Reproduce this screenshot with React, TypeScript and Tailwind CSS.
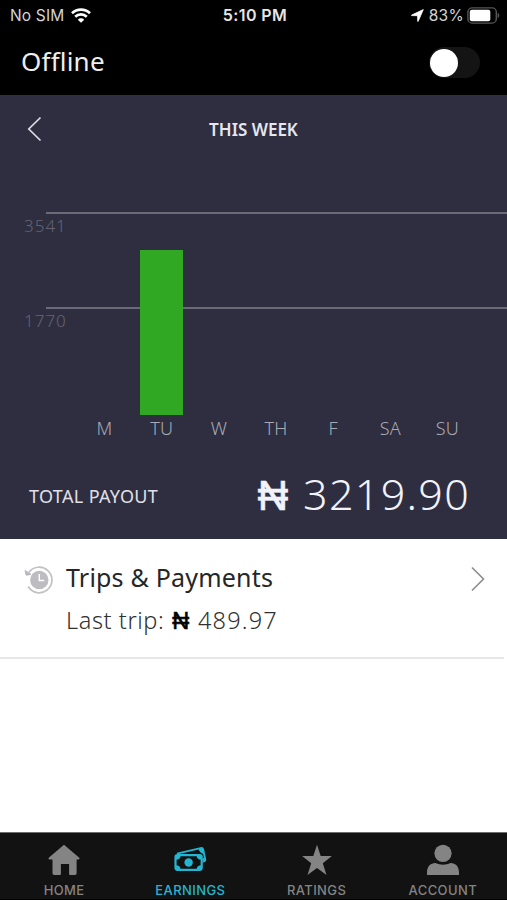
import React from "react";

const DAYS = [
  { label: "M", height: 0 },
  { label: "TU", height: 165 },
  { label: "W", height: 0 },
  { label: "TH", height: 0 },
  { label: "F", height: 0 },
  { label: "SA", height: 0 },
  { label: "SU", height: 0 },
];

const StatusBar: React.FC = () => (
  <div className="grid h-[30px] grid-cols-3 items-center pl-[10px] pr-[7px] font-['Inter',sans-serif] text-[15.5px] leading-none text-[#d4d4d4]">
    <div className="flex items-center gap-[7px]">
      <span className="pt-px whitespace-nowrap tracking-[0.15px]">No SIM</span>
      <svg width="20" height="15" viewBox="0 0 20 15" fill="none" stroke="#fff" strokeWidth="2.7">
        <path d="M1 5.2a13 13 0 0 1 18 0" />
        <path d="M4.2 8.7a8.5 8.5 0 0 1 11.6 0" />
        <path d="M10 14.8 6.8 11.8a4.3 4.3 0 0 1 6.4 0Z" fill="#fff" stroke="none" />
      </svg>
    </div>
    <div className="text-center text-[16px] font-semibold tracking-[0.4px] whitespace-nowrap text-[#e6e6e6]">5:10 PM</div>
    <div className="flex items-center justify-end">
      <svg width="13" height="13" viewBox="0 0 13 13" fill="#fff" stroke="#fff" strokeWidth=".8" strokeLinejoin="round" className="mr-[5px]">
        <path d="M12.3.6.6 6.1c-.3.2-.2.5.1.5l5.9.1.1 5.5c0 .4.3.4.5.1Z" />
      </svg>
      <span className="mr-[3px] pt-px tracking-[0.3px]">83%</span>
      <svg width="33" height="17" viewBox="0 0 33 17">
        <rect x=".9" y=".9" width="28.4" height="15.2" rx="4.2" fill="none" stroke="#555" strokeWidth="1.4" />
        <rect x="2.8" y="2.8" width="20.5" height="11.4" rx="2" fill="#fff" />
        <path d="M30.6 5.8c2.2.9 2.2 4.5 0 5.4Z" fill="#555" />
      </svg>
    </div>
  </div>
);

const OnlineToggle: React.FC = () => (
  <div className="flex h-[65px] items-center justify-between pl-[21px] pr-[27px]">
    <span className="-mt-[4px] text-[26px] leading-none tracking-[0.2px] text-[#eee]">Offline</span>
    <div className="flex h-[31px] w-[51px] items-center rounded-full bg-[#141414] pl-[1px]">
      <div className="size-[28px] rounded-full bg-white" />
    </div>
  </div>
);

const WeekChart: React.FC = () => (
  <div className="grid h-[245px]">
    <div className="col-start-1 row-start-1 pt-px">
      {[3541, 1770].map((value) => (
        <div key={value} className="h-[94.5px]">
          <div className="ml-[46px] h-[2px] bg-[#696978]" />
          <div className="pt-[2px] pl-[24px] text-[17px] leading-[19px] font-[350] tracking-[1px] text-[#636371]">{value}</div>
        </div>
      ))}
    </div>
    <div className="z-10 col-start-1 row-start-1 ml-[76px] grid w-[400px] grid-cols-7">
      {DAYS.map((day) => (
        <div key={day.label} className="flex flex-col items-center justify-end">
          <div className="w-[43px] bg-[#31a824]" style={{ height: day.height }} />
          <div className="h-[41px] pt-[2px] text-[18px] leading-[22px] font-[350] tracking-[0.2px] text-[#aaaab5]">{day.label}</div>
        </div>
      ))}
    </div>
  </div>
);

const EarningsPanel: React.FC = () => (
  <section className="flex h-[444px] flex-col bg-[#2e2e40]">
    <header className="grid h-[68px] grid-cols-[1fr_auto_1fr] items-center px-[27px]">
      <svg width="16" height="26" viewBox="0 0 16 26" fill="none" stroke="#dcdce4" strokeWidth="1.7">
        <path d="M13.5 1.5 1.8 13l11.7 11.5" />
      </svg>
      <h1 className="pt-px text-[17px] font-semibold text-[#e6e6ee]">THIS WEEK</h1>
    </header>
    <div className="pt-[48px]">
      <WeekChart />
    </div>
    <div className="flex h-[82px] items-center justify-between pl-[29px] pr-[37px]">
      <span className="-mt-[2px] text-[18px] tracking-[0.35px] text-[#e0e0e8]">TOTAL PAYOUT</span>
      <div className="-mt-[6px] flex items-baseline gap-[15px] text-[#f2f2fa]">
        <span className="font-['Liberation_Sans',sans-serif] text-[42px] leading-none [-webkit-text-stroke:0.7px_currentColor]">₦</span>
        <span className="text-[43px] leading-none font-light tracking-[1.3px]">3219.90</span>
      </div>
    </div>
  </section>
);

const TripsRow: React.FC = () => (
  <div className="mr-[3px] flex h-[120px] items-start border-b-[2px] border-[#e6e6e6] pt-[21px] pl-[24px]">
    <svg width="30" height="30" viewBox="0 0 30 30" className="mt-[5px] mr-[12px]" fill="none">
      <path d="M4.600 7.800A12.800 12.800 0 1 1 4.200 21.500" stroke="#c2c2c6" strokeWidth="1.7" />
      <path d="m1 5.400 1.200 4.800 4.800-.8Z" fill="#b8b8bd" stroke="#b8b8bd" strokeWidth="1" strokeLinejoin="round" />
      <circle cx="15.300" cy="14.900" r="9.200" fill="#bcbcc1" />
      <path d="M15.300 9v6.600h4.800" stroke="#fff" strokeWidth="1.500" />
    </svg>
    <div className="flex-1">
      <div className="text-[25px] leading-[34px] tracking-[0.2px] text-[#262626]">Trips &amp; Payments</div>
      <div className="mt-[10px] flex items-baseline text-[23.5px] leading-[32px] font-[350] tracking-[0.6px] text-[#303030]">
        <span>Last trip:</span>
        <span className="mx-[8px] font-['Liberation_Sans',sans-serif] font-normal text-black [-webkit-text-stroke:0.6px_currentColor]">₦</span>
        <span className="tracking-[1.2px]">489.97</span>
      </div>
    </div>
    <svg width="16" height="26" viewBox="0 0 16 26" className="mt-[6px] mr-[18px]" fill="none" stroke="#8c8c8c" strokeWidth="1.6">
      <path d="M2 1.5 13.5 13 2 24.5" />
    </svg>
  </div>
);

const HomeIcon = () => (
  <svg width="32" height="32" viewBox="0 0 32 32" fill="currentColor">
    <path d="M16 .7 31 13.6c1 .9.6 1.9-.6 1.9h-1.8v13.8c0 1.2-.6 1.7-1.7 1.7h-5.1c-.5 0-.7-.3-.7-.8V20h-8.200v10.200c0 .5-.3.8-.8.8H6.200c-1 0-1.700-.5-1.700-1.700V15.500H1.700c-1.300 0-1.600-1-.7-1.900Z" />
  </svg>
);

const EarningsIcon = () => (
  <svg width="34" height="32" viewBox="0 0 34 32" fill="none" stroke="currentColor">
    <path d="M4 9.600 27.600 4.100c1.400-.3 2.300.1 2.600 1.400l2 9.800c.2 1.300-.6 2-2.400 2.300" strokeWidth="1.900" />
    <path d="M25.500 4.800 30 4l1.200 6c-3-.4-5.200-2.200-5.700-5.200ZM32.300 15.500l-2.500 2v-4Z" fill="currentColor" stroke="none" />
    <rect x="2.500" y="11.200" width="26.200" height="14.600" rx="2" strokeWidth="2.200" />
    <circle cx="15.600" cy="18.500" r="4.200" fill="currentColor" stroke="none" />
    <path d="M3 12h4.500c0 2.400-1.800 3.800-4.500 3.800ZM28.200 12h-4.500c0 2.400 1.800 3.800 4.500 3.800ZM3 25h4.500c0-2.400-1.800-3.800-4.500-3.800ZM28.200 25h-4.500c0-2.400 1.800-3.800 4.500-3.800Z" fill="currentColor" stroke="none" />
  </svg>
);

const StarIcon = () => (
  <svg width="32" height="32" viewBox="0 0 32 32" fill="currentColor">
    <path d="m16 .8 3.700 11.300h11.200l-9.100 7.200L25.500 31 16 24 6.500 31l3.700-11.700-9.100-7.200h11.200Z" />
  </svg>
);

const AccountIcon = () => (
  <svg width="34" height="32" viewBox="0 0 34 32" fill="currentColor">
    <circle cx="17" cy="9.300" r="8.600" />
    <path d="M1 31v-2.200C1 22.600 4.200 19 9.500 19c2.500 1.200 5 1.700 7.500 1.700s5-.5 7.500-1.700C29.800 19 33 22.600 33 28.800V31Z" />
  </svg>
);

const TABS = [
  { label: "HOME", icon: <HomeIcon />, color: "text-[#848484]" },
  { label: "EARNINGS", icon: <EarningsIcon />, color: "text-[#24b5d1]" },
  { label: "RATINGS", icon: <StarIcon />, color: "text-[#848484]" },
  { label: "ACCOUNT", icon: <AccountIcon />, color: "text-[#848484]" },
];

const TabBar: React.FC = () => (
  <nav className="mt-auto grid h-[68px] grid-cols-4 border-t border-b border-t-[#6d6d6d] border-b-black bg-[#121212] px-px">
    {TABS.map((tab) => (
      <div key={tab.label} className={`flex flex-col items-center pt-[11px] ${tab.color}`}>
        {tab.icon}
        <span className="mt-[7px] font-['Inter',sans-serif] text-[13px] leading-[15px] font-medium tracking-[0.4px]">{tab.label}</span>
      </div>
    ))}
  </nav>
);

const App: React.FC = () => (
  <div className="flex h-[900px] w-full flex-col overflow-hidden bg-white font-['Noto_Sans',sans-serif]">
    <div className="bg-black">
      <StatusBar />
      <OnlineToggle />
    </div>
    <EarningsPanel />
    <TripsRow />
    <TabBar />
  </div>
);

export default App;
